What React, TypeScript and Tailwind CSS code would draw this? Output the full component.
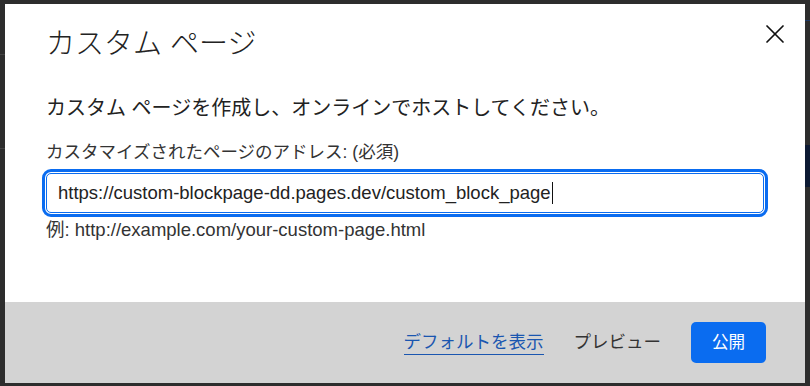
import { X } from "lucide-react"

const font = { fontFamily: '"Liberation Sans", "Noto Sans CJK JP", sans-serif' }

export default function App() {
  return (
    <div className="relative h-[386px] w-[810px] overflow-hidden bg-[#2d2d2d] pl-[5px] pt-[4px]" style={font}>
      {/* faint page behind the overlay */}
      <div className="absolute left-0 top-[54px] h-px w-[5px] bg-[#444]" />
      <div className="absolute left-0 top-[148px] h-px w-[5px] bg-[#444]" />
      <div className="absolute right-0 top-[145px] h-[42px] w-[5px] bg-[#0d1a33]" />
      <div className="absolute right-0 top-[20px] h-px w-[5px] bg-[#1e3a66]" />

      <div className="flex h-[379px] w-[800px] flex-col bg-white">
        <div className="flex-1 pl-[41px] pr-[14px]">
          <div className="flex items-start justify-between">
            <h1 className="pt-[20px] text-[29px] font-light leading-[40px] text-[#222]">
              カスタム ページ
            </h1>
            <button className="mt-[14px] text-[#111]">
              <X className="h-[32px] w-[32px]" strokeWidth={1.3} />
            </button>
          </div>

          <div className="pr-[27px]">
            <p className="mt-[30px] text-[20px] leading-[28px] text-[#222]">
              カスタム ページを作成し、オンラインでホストしてください。
            </p>

            <label className="mt-[18px] block text-[17.5px] leading-[24px] text-[#333]">
              カスタマイズされたページのアドレス: (必須)
            </label>

            <div className="mt-[9px] flex h-[40px] items-center rounded-[5px] border border-[#0a6cf0] px-[11px] text-[18.5px] text-[#222] outline-3 outline-offset-1 outline-[#0a6cf0]">
              https://custom-blockpage-dd.pages.dev/custom_block_page
              <span className="ml-px h-[22px] w-px bg-[#111]" />
            </div>

            <p className="mt-[5px] text-[18.5px] leading-[24px] text-[#333]">
              例: http://example.com/your-custom-page.html
            </p>
          </div>
        </div>

        <div className="flex h-[81px] items-center justify-end gap-[30px] bg-[#d3d3d3] pr-[39px]">
          <a className="border-b border-[#1a56b0] pb-[1px] text-[17.5px] leading-[22px] text-[#1a56b0]">
            デフォルトを表示
          </a>
          <span className="text-[17.5px] text-[#333]">プレビュー</span>
          <button className="h-[41px] w-[75px] rounded-[5px] bg-[#0a6cf0] text-[16.5px] text-white">
            公開
          </button>
        </div>
      </div>
    </div>
  )
}
